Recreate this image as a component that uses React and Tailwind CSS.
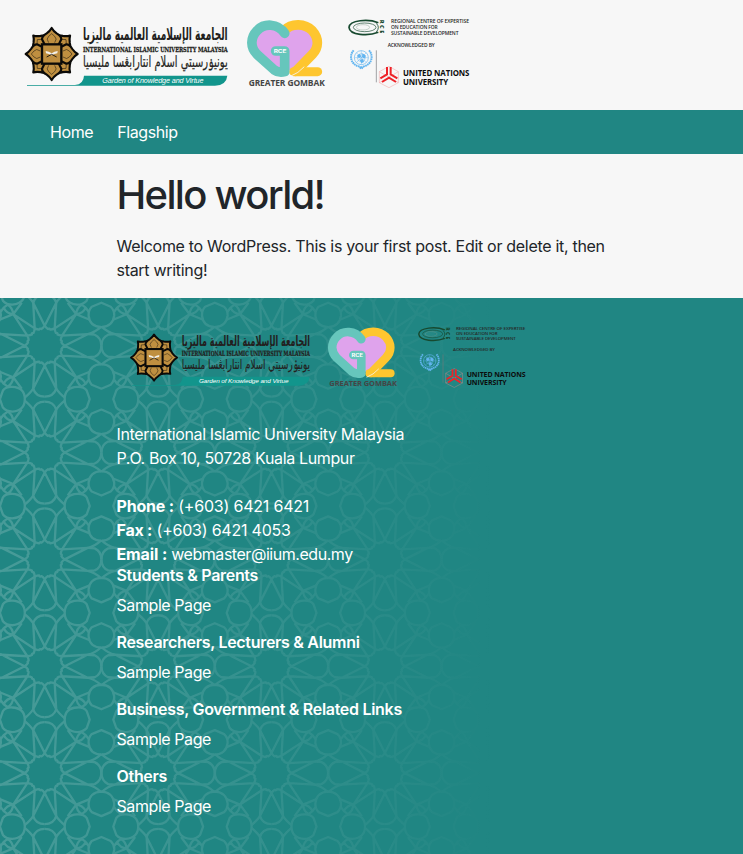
import React from 'react';

const SANS = "font-['Inter','Liberation_Sans',sans-serif]";

function Emblem() {
  const petal = 'M-17 -20 L-29 -44 Q-29 -54 -15 -62 Q-5 -69 0 -78 Q5 -69 15 -62 Q29 -54 29 -44 L17 -20 Z';
  const inner = 'M-9 -34 Q-18 -46 -9 -53 L0 -61 L9 -53 Q18 -46 9 -34';
  const draw = (a) => (
    <g key={a} transform={`rotate(${a})`}>
      <path d={petal} fill="#bf8f40" stroke="#0b0a08" strokeWidth="6.5" strokeLinejoin="round" />
      <path d={inner} fill="none" stroke="#0b0a08" strokeWidth="1.5" />
    </g>
  );
  return (
    <g transform="translate(110 132)">
      {[45, 135, 225, 315].map(draw)}
      {[0, 90, 180, 270].map(draw)}
      <rect x="-29" y="-29" width="58" height="58" fill="#bf8f40" stroke="#0b0a08" strokeWidth="7" />
      <path d="M-18 -9 Q-8 -8 0 -2 Q8 -8 18 -9 L17 -2 Q8 -1 0 4 Q-8 -1 -17 -2 Z" fill="#f4f1ea" />
      <path d="M-15 9 L0 1 L15 9" fill="none" stroke="#0b0a08" strokeWidth="2.5" />
    </g>
  );
}

function IiumLogo({ className }) {
  return (
    <svg className={className} viewBox="15 15 630 240">
      <Emblem />
      <g fill="#231f20">
        <text x="421" y="91" textAnchor="middle" direction="rtl" fontFamily="DejaVu Sans" fontWeight="700" fontSize="51" textLength="434" lengthAdjust="spacingAndGlyphs">الجامعة الإسلامية العالمية ماليزيا</text>
        <text x="204" y="125" fontFamily="DejaVu Serif, serif" fontWeight="700" fontSize="24" textLength="434" lengthAdjust="spacingAndGlyphs" stroke="#231f20" strokeWidth="0.8">INTERNATIONAL ISLAMIC UNIVERSITY MALAYSIA</text>
        <text x="421" y="171" textAnchor="middle" direction="rtl" fontFamily="DejaVu Sans" fontSize="46" textLength="434" lengthAdjust="spacingAndGlyphs" stroke="#231f20" strokeWidth="0.6">يونيۏرسيتي اسلام انتارابڠسا مليسيا</text>
      </g>
      <path d="M207 197 H637 Q634 226 600 227 H36 V225 H180 Q206 222 207 197 Z" fill="#12958c" />
      <text x="262" y="218" fill="#fff" fontFamily="Liberation Sans, sans-serif" fontStyle="italic" fontSize="21" textLength="303" lengthAdjust="spacingAndGlyphs">Garden of Knowledge and Virtue</text>
    </svg>
  );
}

function GombakLogo({ className }) {
  return (
    <svg className={className} viewBox="33 15 240 240">
      <path d="M150 65 C125 35 52 45 52 98 C52 130 100 160 150 188 C198 160 246 130 246 98 C246 45 180 35 150 65" fill="#dfa3ec" />
      <g fill="none" strokeLinecap="round" strokeLinejoin="round">
        <path d="M147 62 C170 38 210 40 232 62 C252 84 252 112 232 133 L182 184" stroke="#fec62f" strokeWidth="29" />
        <path d="M176 185 H248" stroke="#fec62f" strokeWidth="27" />
        <path d="M168 198 Q190 190 207 171" stroke="#f7f7f7" strokeWidth="2.5" />
        <path d="M149 70 C128 39 87 39 66 62 C45 84 46 113 66 133 L118 180 Q132 190 149 185 V123 H122" stroke="#66c6bc" strokeWidth="29" />
      </g>
      <text x="116" y="129" fill="#fff" fontFamily="Inter, sans-serif" fontWeight="700" fontSize="15" textLength="38" lengthAdjust="spacingAndGlyphs">RCE</text>
      <text x="41" y="229" fill="#454545" fontFamily="Open Sans, sans-serif" fontWeight="700" fontSize="25" textLength="228" lengthAdjust="spacingAndGlyphs">GREATER GOMBAK</text>
    </svg>
  );
}

function UnuLogo({ className }) {
  return (
    <svg className={className} viewBox="336 15 372 240">
      <g fill="none" stroke="#17492f">
        <path d="M430 38 C400 26 344 30 342 52 C344 76 400 79 430 67" strokeWidth="5" />
        <path d="M424 40 Q436 52 424 66" strokeWidth="2.5" />
        <ellipse cx="389" cy="52" rx="34" ry="13" strokeWidth="2" />
        <ellipse cx="384" cy="52" rx="20" ry="8" strokeWidth="1.2" stroke="#7d9b89" />
      </g>
      <g fill="#17492f" fontFamily="Open Sans, sans-serif" fontWeight="800" fontSize="17">
        <text transform="translate(434 29) rotate(90)">R</text>
        <text transform="translate(434 45) rotate(90)">C</text>
        <text transform="translate(434 61) rotate(90)">E</text>
      </g>
      <g fill="#262626" fontFamily="Open Sans, sans-serif" fontWeight="600" fontSize="14.5">
        <text x="468" y="40" textLength="234" lengthAdjust="spacingAndGlyphs">REGIONAL CENTRE OF EXPERTISE</text>
        <text x="468" y="57" textLength="140" lengthAdjust="spacingAndGlyphs">ON EDUCATION FOR</text>
        <text x="468" y="74" textLength="202" lengthAdjust="spacingAndGlyphs">SUSTAINABLE DEVELOPMENT</text>
        <text x="458" y="110" textLength="141" lengthAdjust="spacingAndGlyphs">ACKNOWLEDGED BY</text>
      </g>
      <g fill="none" stroke="#62b5f0">
        <circle cx="379" cy="143" r="21" strokeWidth="2" />
        <circle cx="379" cy="143" r="12" strokeWidth="1.5" />
        <path d="M358 143 H400 M379 122 V164 M364 128 L394 158 M394 128 L364 158" strokeWidth="1.3" />
        <path d="M356 121 C342 136 346 164 374 170 L384 175 M402 121 C416 136 412 164 384 170 L374 175" strokeWidth="6" strokeDasharray="5 1.5" />
      </g>
      <path d="M366 137 L374 131 L379 139 L372 145 Z M382 130 L393 137 L388 146 L381 141 Z M374 149 L384 147 L387 156 L379 160 Z" fill="#62b5f0" />
      <path d="M424 121 V217" stroke="#77797b" strokeWidth="2" />
      <path d="M462 169 L490 185 V218 L462 233 L433 218 V185 Z M433 185 L490 218 M490 185 L433 218" fill="none" stroke="#f08a8a" strokeWidth="1.2" />
      <g stroke="#ee2228" strokeWidth="6" fill="none">
        <path d="M456 171 V193 L436 205 M467 171 V193 L487 205 M441 216 L462 203 L483 216" />
      </g>
      <g fill="#0c0c0c" fontFamily="Open Sans, sans-serif" fontWeight="700" fontSize="24">
        <text x="504" y="197" textLength="199" lengthAdjust="spacingAndGlyphs">UNITED NATIONS</text>
        <text x="504" y="225" textLength="135" lengthAdjust="spacingAndGlyphs">UNIVERSITY</text>
      </g>
    </svg>
  );
}

const polar = (r, deg) => {
  const t = (deg * Math.PI) / 180;
  return `${(r * Math.cos(t)).toFixed(2)} ${(r * Math.sin(t)).toFixed(2)}`;
};

// One rosette of the girih lattice: twelve wedges around a star, petal caps and corner rings.
function Rosette() {
  const wedges = [];
  for (let k = 0; k < 12; k += 1) {
    const a = k * 30;
    wedges.push(
      `M${polar(20, a)} L${polar(44.5, a + 15)} L${polar(20, a + 30)} Q${polar(17.5, a + 24)} ${polar(17, a + 19)} Q${polar(18.5, a + 15)} ${polar(17, a + 11)} Q${polar(17.5, a + 6)} ${polar(20, a)}`
    );
  }
  const quarter =
    'M11.5 -43 Q9 -51 0 -51 M43 -11.5 L50 -11 Q56.6 -8 56.6 0 M11.5 -43 Q14 -47 20 -52 M31.5 -31.5 L23 -43 M31.5 -31.5 Q38 -32 41 -38 L44 -34 M31.5 -31.5 Q32 -38 37 -41 L41 -38 M43 -11.5 Q50 -13 56.6 -19 M31.5 -31.5 L45 -26';
  return (
    <>
      <path d={wedges.join(' ')} />
      {['scale(1 1)', 'scale(-1 1)', 'scale(1 -1)', 'scale(-1 -1)'].map((t) => (
        <g key={t} transform={t}>
          <path d={quarter} />
        </g>
      ))}
      <path d="M32.5 -65.6 Q39 -66 42 -62 L45 -53.4 L42 -45 Q38 -41 32.5 -41 Q20 -42 20 -53.4 Q20 -65 32.5 -65.6 Z" />
      <path d="M81 -65.6 Q74.6 -66 71.6 -62 L68.6 -53.4 L71.6 -45 Q75 -41 81 -41 Q93.5 -42 93.5 -53.4 Q93.5 -65 81 -65.6 Z" />
      <path d="M56.7 -43 L66 -39 Q70 -35 69.5 -30 Q68 -19 56.7 -18.5 Q45 -19 43.9 -30 Q43.5 -35 47 -39 Z" />
      <path d="M56.7 43 L66 39 Q70 35 69.5 30 Q68 19 56.7 18.5 Q45 19 43.9 30 Q43.5 35 47 39 Z" />
    </>
  );
}

function Pattern() {
  const cells = [];
  for (let c = -1; c < 5; c += 1) {
    for (let r = -1; r < 6; r += 1) cells.push([44.7 + c * 113.4, 47.7 + r * 106.85]);
  }
  return (
    <svg className="absolute inset-0 h-full w-full" aria-hidden="true">
      <defs>
        <linearGradient id="fadeRight" gradientUnits="userSpaceOnUse" x1="0" y1="0" x2="495" y2="0">
          <stop offset="0" stopColor="#fff" stopOpacity="0.18" />
          <stop offset="0.5" stopColor="#fff" stopOpacity="0.095" />
          <stop offset="0.8" stopColor="#fff" stopOpacity="0.04" />
          <stop offset="1" stopColor="#fff" stopOpacity="0" />
        </linearGradient>
      </defs>
      <mask id="rosettes" maskUnits="userSpaceOnUse" x="0" y="0" width="743" height="556">
        <g fill="none" stroke="#fff" strokeWidth="2.3" strokeLinejoin="round">
          {cells.map(([x, y]) => (
            <g key={`${x}-${y}`} transform={`translate(${x} ${y})`}>
              <Rosette />
            </g>
          ))}
        </g>
      </mask>
      <rect width="743" height="556" fill="url(#fadeRight)" mask="url(#rosettes)" />
    </svg>
  );
}

const sections = [
  'Students & Parents',
  'Researchers, Lecturers & Alumni',
  'Business, Government & Related Links',
  'Others',
];

export default function App() {
  return (
    <div className={`${SANS} min-h-[854px] w-full overflow-hidden bg-[#f7f7f7] text-base leading-6 font-[430] tracking-[-0.3px] text-[#212529]`}>
      <header className="flex h-[110px] items-start pt-[15px] pl-5">
        <IiumLogo className="h-20 w-[210px]" />
        <GombakLogo className="ml-4 h-20 w-20" />
        <UnuLogo className="ml-[21px] h-20 w-[124px]" />
      </header>

      <nav className="flex h-11 items-center gap-6 bg-[#208683] pl-[50px] tracking-[-0.4px] text-white">
        <a href="#home">Home</a>
        <a href="#flagship">Flagship</a>
      </nav>

      <main className="px-[116.5px] pt-[17px]">
        <h1 className="mb-[15px] text-[40px] leading-[48px] font-medium tracking-[-1.7px]">Hello world!</h1>
        <p className="pb-4">
          Welcome to WordPress. This is your first post. Edit or delete it, then
          <br />
          start writing!
        </p>
      </main>

      <footer className="relative h-[556px] bg-[#208683] text-white">
        <Pattern />
        <div className="relative px-[116.5px] pt-[24.5px]">
          <div className="flex h-[99.5px] items-start pl-[9.5px]">
            <IiumLogo className="h-[71px] w-[186px]" />
            <GombakLogo className="ml-[14.5px] h-[71px] w-[71px]" />
            <UnuLogo className="ml-[19px] h-[71px] w-[110px]" />
          </div>
          <address className="tracking-[-0.46px] not-italic">
            <p className="tracking-[-0.36px]">International Islamic University Malaysia</p>
            <p className="tracking-[-0.35px]">P.O. Box 10, 50728 Kuala Lumpur</p>
            <p className="mt-6 tracking-[-0.2px]"><strong className="font-bold">Phone :</strong> (+603) 6421 6421</p>
            <p className="tracking-[-0.22px]"><strong className="font-bold">Fax :</strong> (+603) 6421 4053</p>
            <p><strong className="font-bold tracking-[-0.1px]">Email :</strong> webmaster@iium.edu.my</p>
          </address>
          {sections.map((title) => (
            <section key={title} className="mb-4">
              <h5 className="mb-2 leading-[19px] font-semibold tracking-[-0.3px]">{title}</h5>
              <a href="#sample" className="block tracking-[-0.42px]">Sample Page</a>
            </section>
          ))}
        </div>
      </footer>
    </div>
  );
}
